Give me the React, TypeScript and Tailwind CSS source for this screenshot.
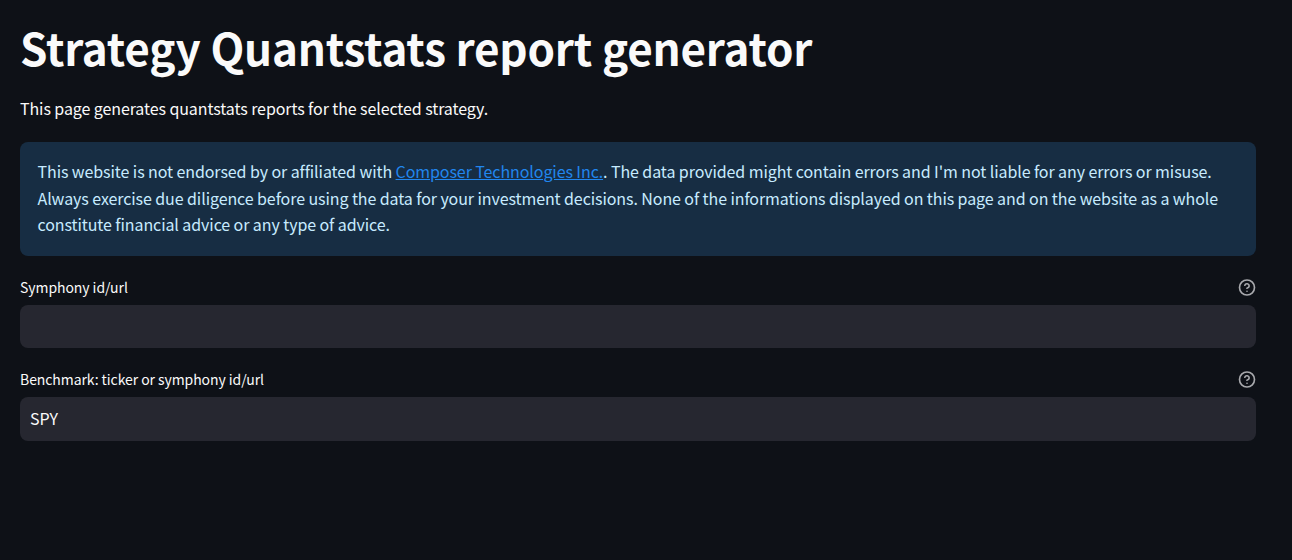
import { CircleHelp } from "lucide-react";

function Field({ label, value }: { label: string; value?: string }) {
  return (
    <div className="flex flex-col">
      <div className="flex items-center justify-between h-[20px] mb-[8px]">
        <span className="text-[14px] leading-[20px] tracking-[-0.07px] text-[#fafafa]">{label}</span>
        <CircleHelp size={18} strokeWidth={2.2} className="text-[#a8a9ad] translate-y-[0.5px]" />
      </div>
      <div className={`${value ? "h-[44px] pb-[1px]" : "h-[43px]"} rounded-lg bg-[#262730] flex items-center px-[10px] text-[16px] text-[#fafafa]`}>{value}</div>
    </div>
  );
}

export default function App() {
  return (
    <div className="w-[1292px] h-[560px] overflow-hidden bg-[#0e1117] text-[#fafafa] px-[20px] pr-[36px]" style={{ fontFamily: '"Noto Sans CJK SC", "Noto Sans", sans-serif' }}>
      <h1 className="text-[44px] leading-[53px] font-bold pt-[21px] tracking-[-0.2px]">Strategy Quantstats report generator</h1>
      <p className="text-[16px] leading-[26px] mt-[21px] tracking-[-0.09px]">This page generates quantstats reports for the selected strategy.</p>
      <div className="mt-[21px] rounded-lg bg-[#172d43] text-[#c7ebff] pl-[17.5px] pr-[18px] pt-[16px] pb-[18px] text-[16px] leading-[26.5px] tracking-[-0.085px]">
        This website is not endorsed by or affiliated with <a className="text-[#2186ee] underline">Composer Technologies Inc.</a>. The data provided might contain errors and I'm not liable for any errors or misuse. Always exercise due diligence before using the data for your investment decisions. None of the informations displayed on this page and on the website as a whole constitute financial advice or any type of advice.
      </div>
      <div className="mt-[21px] flex flex-col gap-[21px]">
        <Field label="Symphony id/url" />
        <Field label="Benchmark: ticker or symphony id/url" value="SPY" />
      </div>
    </div>
  );
}
